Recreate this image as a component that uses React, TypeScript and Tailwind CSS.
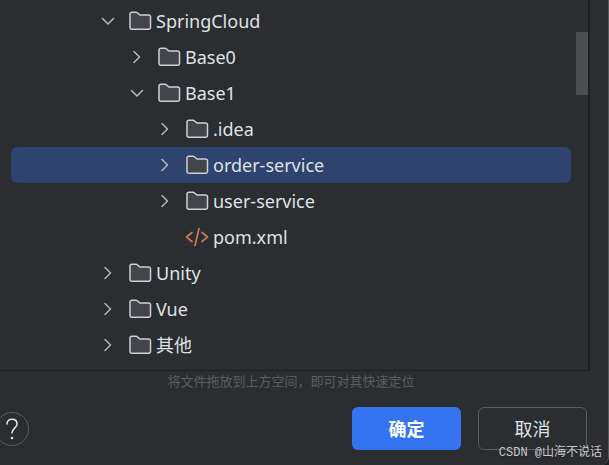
import { useState } from 'react';
import { clsx } from 'clsx';

type Level = 1 | 2 | 3;

interface TreeNode {
  label: string;
  level: Level;
  kind: 'open' | 'closed' | 'file';
}

const nodes: TreeNode[] = [
  { label: 'SpringCloud', level: 1, kind: 'open' },
  { label: 'Base0', level: 2, kind: 'closed' },
  { label: 'Base1', level: 2, kind: 'open' },
  { label: '.idea', level: 3, kind: 'closed' },
  { label: 'order-service', level: 3, kind: 'closed' },
  { label: 'user-service', level: 3, kind: 'closed' },
  { label: 'pom.xml', level: 3, kind: 'file' },
  { label: 'Unity', level: 1, kind: 'closed' },
  { label: 'Vue', level: 1, kind: 'closed' },
  { label: '其他', level: 1, kind: 'closed' },
];

const indent: Record<Level, string> = {
  1: 'pl-[89px]',
  2: 'pl-[118px]',
  3: 'pl-[146px]',
};

function Chevron({ kind }: { kind: TreeNode['kind'] }) {
  return (
    <svg viewBox="0 0 16 16" className="size-4 shrink-0" fill="none" stroke="#b4b8bf" strokeWidth="1.5" strokeLinecap="round" strokeLinejoin="round" aria-hidden="true">
      {kind === 'open' && <path d="M2.500 5.500 8 11l5.500-5.500" />}
      {kind === 'closed' && <path d="M5 2.500 10.500 8 5 13.500" />}
    </svg>
  );
}

function FolderIcon() {
  return (
    <svg viewBox="0 0 24 24" className="size-6 shrink-0" aria-hidden="true">
      <path
        d="M2 5A1.800 1.800 0 0 1 3.800 3.200H8a2 2 0 0 1 1.300.5L12 6h8.700a1.800 1.800 0 0 1 1.800 1.800V18.500a1.800 1.800 0 0 1-1.800 1.800H3.800A1.800 1.800 0 0 1 2 18.500Z"
        fill="#43454a"
        stroke="#ced0d6"
        strokeWidth="1.500"
      />
    </svg>
  );
}

function XmlIcon() {
  return (
    <svg viewBox="0 0 24 24" className="size-6 shrink-0" fill="none" stroke="#c77d55" strokeWidth="1.700" strokeLinecap="round" strokeLinejoin="round" aria-hidden="true">
      <path d="M7 7.500 1.500 12 7 16.500M17 7.500l5.500 4.500-5.500 4.500" />
      <path d="M14 3.500 10 20.500" />
    </svg>
  );
}

export default function App() {
  const [selected, setSelected] = useState('order-service');

  return (
    <div className="bg-[#1e1f22] font-['Noto_Sans','Noto_Sans_CJK_SC',sans-serif] text-[#dfe1e5]">
      <main className="relative flex min-h-screen flex-col overflow-hidden rounded-br-lg border-r border-[#55565a] bg-[#2b2d30]">
        <section className="mr-[18px] flex border-r-2 border-b border-[#1e1f22] pb-[7px]">
          <ul role="tree" className="mt-[3px] mr-[5px] ml-[11px] flex-1">
            {nodes.map((node) => (
              <li key={node.label} role="treeitem" aria-selected={selected === node.label}>
                <button
                  type="button"
                  onClick={() => setSelected(node.label)}
                  className={clsx(
                    'flex h-9 w-full items-center rounded-md text-left text-[18px] leading-6',
                    indent[node.level],
                    selected === node.label && 'bg-[#2e436e]'
                  )}
                >
                  <Chevron kind={node.kind} />
                  <span className="mr-1 ml-3">{node.kind === 'file' ? <XmlIcon /> : <FolderIcon />}</span>
                  <span>{node.label}</span>
                </button>
              </li>
            ))}
          </ul>
          <div className="w-3 pt-8">
            <div className="h-[63px] bg-[#4d4e51]" />
          </div>
        </section>

        <p className="pr-[26px] text-center text-[13px] leading-5 text-[#5a5d63]">
          将文件拖放到上方空间，即可对其快速定位
        </p>

        <footer className="mt-4 flex items-center pr-[21px]">
          <button
            type="button"
            aria-label="Help"
            className="-ml-[5px] flex size-[34px] items-center justify-center rounded-full border border-[#5a5d63]"
          >
            <svg viewBox="0 0 24 24" className="size-6" fill="none" stroke="#dfe1e5" strokeWidth="1.600" strokeLinecap="round" aria-hidden="true">
              <path d="M7 7C7 4 9 2.300 12 2.300s5 1.900 5 4.600c0 3.900-5 4.700-5 9.100" />
              <circle cx="12" cy="21" r="1.300" fill="#dfe1e5" stroke="none" />
            </svg>
          </button>
          <div className="ml-auto flex gap-[17px] text-[18px] leading-6">
            <button type="button" className="h-[43px] w-[109px] rounded-md bg-[#3574f0] font-bold text-white">
              确定
            </button>
            <button type="button" className="h-[43px] w-[109px] rounded-md border border-[#5a5d63]">
              取消
            </button>
          </div>
        </footer>

        <span className="absolute right-[6px] bottom-1 font-['Liberation_Mono','Noto_Sans_CJK_SC',monospace] text-[12px] leading-4 text-[#c8c9cb] text-shadow-sm">
          CSDN @山海不说话
        </span>
      </main>
    </div>
  );
}
